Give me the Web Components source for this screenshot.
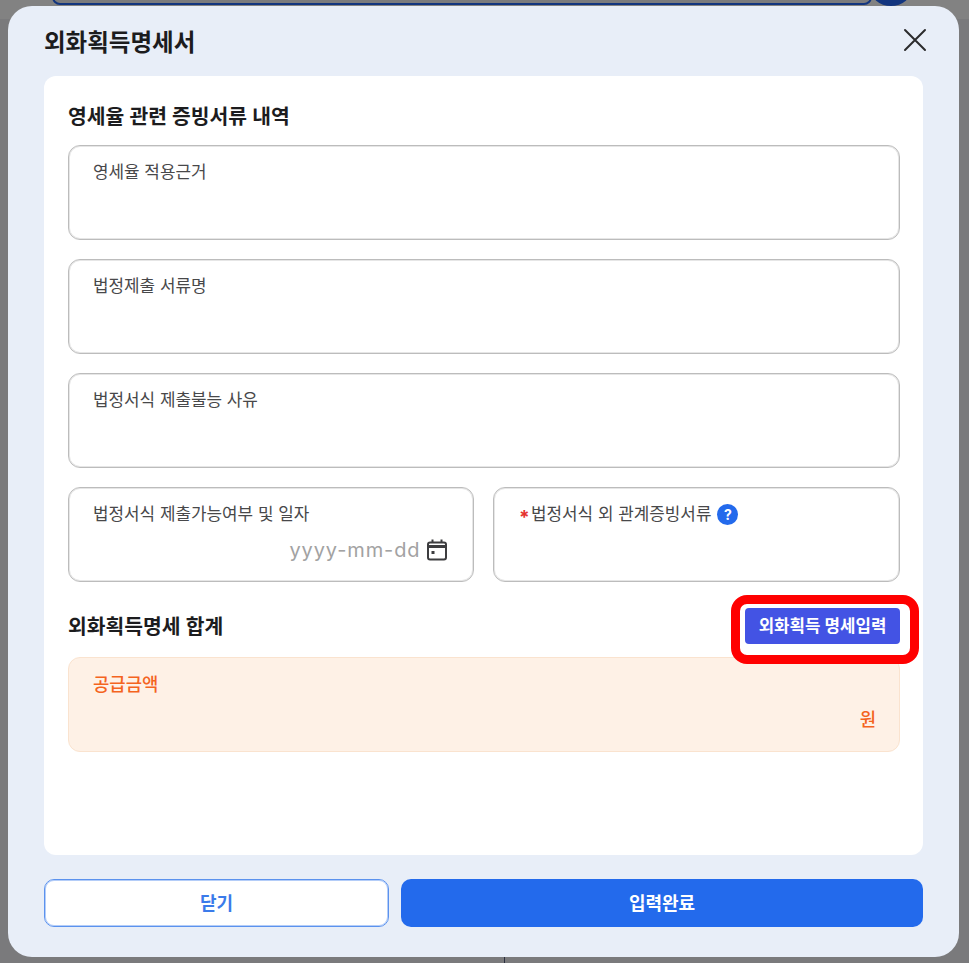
<!DOCTYPE html>
<html lang="ko">
<head>
<meta charset="utf-8">
<title>외화획득명세서</title>
<style>
    html, body { margin: 0; height: 100%; }
    body {
        width: 969px;
        height: 963px;
        overflow: hidden;
        background: #7a7a7c;
        font-family: Inter, "Noto Sans CJK KR", sans-serif;
    }
</style>
</head>
<body>
<backdrop-page></backdrop-page>
<modal-dialog heading="외화획득명세서">
    <section-title>영세율 관련 증빙서류 내역</section-title>
    <div style="display:flex;flex-direction:column;gap:19.3px;margin-top:14.6px">
        <form-field label="영세율 적용근거"></form-field>
        <form-field label="법정제출 서류명"></form-field>
        <form-field label="법정서식 제출불능 사유"></form-field>
        <div style="display:grid;grid-template-columns:406px 1fr;gap:19px">
            <form-field label="법정서식 제출가능여부 및 일자" date></form-field>
            <form-field label="법정서식 외 관계증빙서류" required help></form-field>
        </div>
    </div>
    <div style="display:flex;justify-content:space-between;align-items:center;margin-top:25.5px">
        <section-title style="padding-top:2px">외화획득명세 합계</section-title>
        <marked-button>외화획득 명세입력</marked-button>
    </div>
    <amount-box label="공급금액" unit="원" style="margin-top:13px"></amount-box>
</modal-dialog>

<script>
class BackdropPage extends HTMLElement {
    constructor() {
        super();
        const shadowRoot = this.attachShadow({ mode: 'open' });
        shadowRoot.innerHTML = `
            <style>
                :host { display: block; position: absolute; inset: 0; }
                #band {
                    position: absolute; left: 0; top: 0; width: 100%; height: 19px;
                    background: #828282;
                }
                #bar {
                    position: absolute; left: 52px; top: -20px; width: 820px; height: 25px;
                    box-sizing: border-box;
                    background: #7b7b7d;
                    border: 2px solid #12357f;
                    border-radius: 8px;
                }
                #dot {
                    position: absolute; left: 870px; top: -30px; width: 42px; height: 36px;
                    background: #12357f;
                    border-radius: 50%;
                }
                #rule {
                    position: absolute; left: 504px; top: 950px; width: 1px; height: 13px;
                    background: #2b2f3f;
                }
            </style>
            <div id="band"></div>
            <div id="bar"></div>
            <div id="dot"></div>
            <div id="rule"></div>
        `;
    }
}

class ModalDialog extends HTMLElement {
    constructor() {
        super();
        const shadowRoot = this.attachShadow({ mode: 'open' });
        shadowRoot.innerHTML = `
            <style>
                :host {
                    display: flex;
                    flex-direction: column;
                    position: absolute;
                    left: 8px; top: 6px;
                    width: 951px; height: 951px;
                    box-sizing: border-box;
                    padding: 0 36px 30px;
                    background: #e8eef8;
                    border-radius: 24px;
                }
                header {
                    height: 70px;
                    display: flex;
                    align-items: center;
                    justify-content: space-between;
                }
                h1 {
                    margin: 0;
                    font: 600 23.5px/1 Inter, "Noto Sans CJK KR", sans-serif;
                    color: #1c1c1e;
                    padding-top: 3px;
                }
                #close { display: block; margin: -2px -4px 0 0; }
                #body {
                    flex: 1;
                    box-sizing: border-box;
                    padding: 28px 23px 0 24px;
                    background: #fff;
                    border-radius: 12px;
                }
                footer {
                    display: grid;
                    grid-template-columns: 345px 1fr;
                    gap: 12px;
                    margin-top: 24px;
                }
                button {
                    height: 48px;
                    box-sizing: border-box;
                    padding: 2px 0 0;
                    border-radius: 10px;
                    font: 600 18px/1 Inter, "Noto Sans CJK KR", sans-serif;
                    cursor: pointer;
                }
                #cancel {
                    background: #fff;
                    border: 1px solid #5b92ee;
                    box-shadow: inset 0 0 0 1px #b4cdf8;
                    color: #3b7bea;
                }
                #done { background: #236aec; border: 0; color: #fff; }
            </style>
            <header>
                <h1></h1>
                <svg id="close" width="24" height="24" viewBox="0 0 24 24" fill="none" stroke="#2b2b2d" stroke-width="2" stroke-linecap="round">
                    <path d="M2 2 L22 22 M22 2 L2 22"/>
                </svg>
            </header>
            <div id="body"><slot></slot></div>
            <footer>
                <button id="cancel">닫기</button>
                <button id="done">입력완료</button>
            </footer>
        `;
        shadowRoot.querySelector('h1').textContent = this.getAttribute('heading');
    }
}

class SectionTitle extends HTMLElement {
    constructor() {
        super();
        const shadowRoot = this.attachShadow({ mode: 'open' });
        shadowRoot.innerHTML = `
            <style>
                :host {
                    display: block;
                    font: 600 20.4px/26px Inter, "Noto Sans CJK KR", sans-serif;
                    color: #1c1c1e;
                }
            </style>
            <slot></slot>
        `;
    }
}

class FormField extends HTMLElement {
    constructor() {
        super();
        const shadowRoot = this.attachShadow({ mode: 'open' });
        shadowRoot.innerHTML = `
            <style>
                :host {
                    display: block;
                    box-sizing: border-box;
                    height: 95px;
                    padding: 14px 24px 0;
                    background: #fff;
                    border: 1px solid #bcbcbc;
                    box-shadow: inset 0 0 0 1px #e6e6e6;
                    border-radius: 12px;
                }
                #label {
                    display: flex;
                    align-items: center;
                    font: 400 16.9px/24px Inter, "Noto Sans CJK KR", sans-serif;
                    color: #48484a;
                    white-space: nowrap;
                }
                #star {
                    display: none;
                    width: 12px;
                    height: 24px;
                    color: #e5322d;
                    font: 700 19px/32px Inter, sans-serif;
                }
                #help {
                    display: none;
                    width: 21px; height: 21px;
                    margin-left: 6px;
                    border-radius: 50%;
                    background: #236aec;
                    color: #fff;
                    font: 700 14px/21px Inter, sans-serif;
                    text-align: center;
                }
                #date {
                    display: none;
                    align-items: center;
                    justify-content: flex-end;
                    gap: 6px;
                    margin: 10px 2.5px 0 0;
                    font: 400 20px/28px Inter, sans-serif;
                    letter-spacing: 0.9px;
                    color: #a2a2a2;
                }
            </style>
            <div id="label"><span id="star">*</span><span id="text"></span><span id="help">?</span></div>
            <div id="date">
                <span>yyyy-mm-dd</span>
                <svg width="20" height="22" viewBox="0 0 20 22" fill="none" stroke="#3d3d3f" stroke-width="2">
                    <rect x="1" y="3.5" width="18" height="17" rx="2"/>
                    <path d="M1 7.5 H19" stroke-width="3"/>
                    <path d="M5.5 0.5 V4 M14.5 0.5 V4"/>
                    <rect x="4.5" y="12" width="3" height="3" fill="#3d3d3f" stroke="none"/>
                </svg>
            </div>
        `;
        shadowRoot.querySelector('#text').textContent = this.getAttribute('label');
        if (this.hasAttribute('required')) {
            shadowRoot.querySelector('#star').style.display = 'inline';
            shadowRoot.querySelector('#label').style.paddingLeft = '1px';
        }
        if (this.hasAttribute('help')) {
            shadowRoot.querySelector('#help').style.display = 'inline-block';
        }
        if (this.hasAttribute('date')) {
            shadowRoot.querySelector('#date').style.display = 'flex';
        }
    }
}

class MarkedButton extends HTMLElement {
    constructor() {
        super();
        const shadowRoot = this.attachShadow({ mode: 'open' });
        shadowRoot.innerHTML = `
            <style>
                :host { display: block; position: relative; }
                button {
                    display: block;
                    width: 155px; height: 36px;
                    padding: 1px 0 0;
                    background: #4353e4;
                    border: 0;
                    border-radius: 4px;
                    color: #fff;
                    font: 600 16.8px/1 Inter, "Noto Sans CJK KR", sans-serif;
                    white-space: nowrap;
                }
                #mark {
                    position: absolute;
                    left: -14px; top: -13px; right: -19px; bottom: -20px;
                    border: 9px solid #ff0000;
                    border-radius: 16px;
                    pointer-events: none;
                }
            </style>
            <button><slot></slot></button>
            <div id="mark"></div>
        `;
    }
}

class AmountBox extends HTMLElement {
    constructor() {
        super();
        const shadowRoot = this.attachShadow({ mode: 'open' });
        shadowRoot.innerHTML = `
            <style>
                :host {
                    display: block;
                    box-sizing: border-box;
                    height: 95px;
                    padding: 15px 23px 0 24px;
                    background: #fef1e6;
                    border: 1px solid #fae3cf;
                    border-radius: 12px;
                    color: #f4641e;
                    font: 500 17.8px/24px Inter, "Noto Sans CJK KR", sans-serif;
                }
                #unit { text-align: right; margin-top: 11px; }
            </style>
            <div id="label"></div>
            <div id="unit"></div>
        `;
        shadowRoot.querySelector('#label').textContent = this.getAttribute('label');
        shadowRoot.querySelector('#unit').textContent = this.getAttribute('unit');
    }
}

window.customElements.define('backdrop-page', BackdropPage);
window.customElements.define('modal-dialog', ModalDialog);
window.customElements.define('section-title', SectionTitle);
window.customElements.define('form-field', FormField);
window.customElements.define('marked-button', MarkedButton);
window.customElements.define('amount-box', AmountBox);
</script>
</body>
</html>
